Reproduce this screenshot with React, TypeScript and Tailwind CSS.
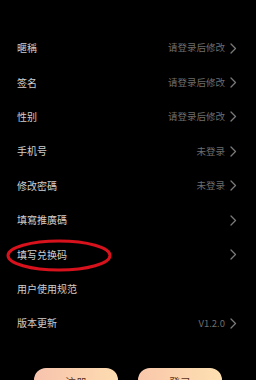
const rows = [
  { label: "暱稱", value: "请登录后修改", arrow: true },
  { label: "签名", value: "请登录后修改", arrow: true },
  { label: "性别", value: "请登录后修改", arrow: true },
  { label: "手机号", value: "未登录", arrow: true },
  { label: "修改密碼", value: "未登录", arrow: true },
  { label: "填寫推廣碼", value: "", arrow: true },
  { label: "填写兑换码", value: "", arrow: true, circled: true },
  { label: "用户使用规范", value: "", arrow: false },
  { label: "版本更新", value: "V1.2.0", arrow: true },
];

function Chevron() {
  return (
    <svg width="7" height="11" viewBox="0 0 7 11" fill="none" className="ml-[5px] shrink-0">
      <path d="M1 1l4.5 4.5L1 10" stroke="#7a7a7a" strokeWidth="1.3" strokeLinecap="round" strokeLinejoin="round" />
    </svg>
  );
}

export default function App() {
  return (
    <div
      className="relative h-[380px] w-[256px] overflow-hidden bg-black"
      style={{ fontFamily: '"Noto Sans CJK SC", "Noto Sans", sans-serif' }}
    >
      <div className="flex flex-col pt-[31px]">
        {rows.map((row) => (
          <div key={row.label} className="relative flex h-[34.4px] items-center pl-[17px] pr-[19px]">
            <span className="text-[10px] leading-none text-[#cfcfcf]">{row.label}</span>
            <div className="ml-auto flex items-center">
              {row.value ? <span className="text-[9.5px] leading-none text-[#6e6e6e]">{row.value}</span> : null}
              {row.arrow ? <Chevron /> : null}
            </div>
            {row.circled ? (
              <svg className="absolute left-[5px] top-[2px]" width="108" height="34" viewBox="0 0 108 34" fill="none">
                <ellipse cx="54" cy="16.5" rx="51" ry="14.5" stroke="#d8121c" strokeWidth="3" />
              </svg>
            ) : null}
          </div>
        ))}
      </div>

      <div className="absolute left-0 right-0 top-[368px] flex justify-between px-[34px]">
        <button className="flex h-[30px] w-[84px] items-start justify-center rounded-[12px] bg-gradient-to-r from-[#f7c3ad] to-[#fddcb0] pt-[6px] text-[11px] text-[#5a3320]">
          注册
        </button>
        <button className="flex h-[30px] w-[84px] items-start justify-center rounded-[12px] bg-gradient-to-r from-[#f9c7ab] to-[#fde0b1] pt-[6px] text-[11px] text-[#5a3320]">
          登录
        </button>
      </div>
    </div>
  );
}
